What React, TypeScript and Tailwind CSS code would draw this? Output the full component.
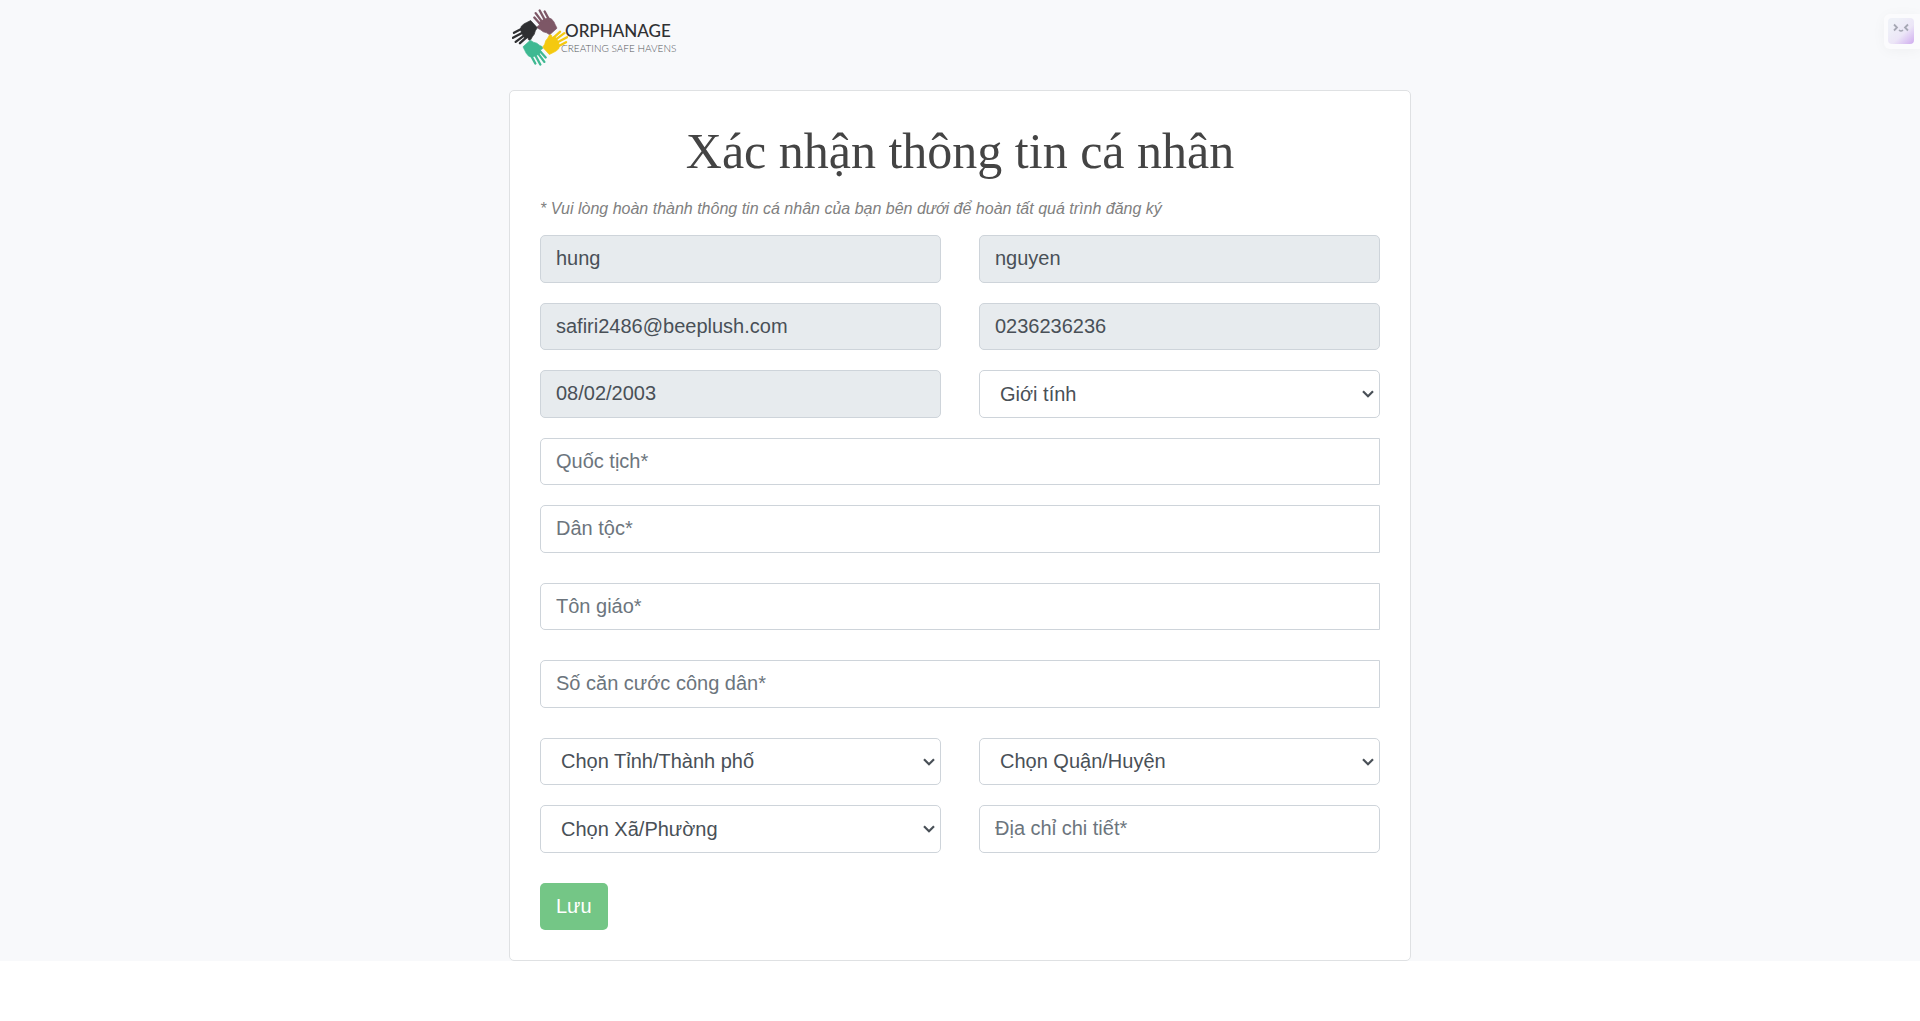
import type { ReactNode } from "react";

const base =
  "block w-full border border-[#ced4da] pb-px text-xl leading-[30px] outline-none placeholder:text-[#6c757d] placeholder:opacity-100";

type FieldProps = { label: string; height: string; value?: string; shape?: string };

function Field({ label, height, value, shape = "rounded-[5px]" }: FieldProps) {
  return value ? (
    <input
      aria-label={label}
      disabled
      defaultValue={value}
      className={`${base} ${height} ${shape} bg-[#e7ebee] px-[15px] text-[#495057]`}
    />
  ) : (
    <input
      aria-label={label}
      placeholder={label}
      className={`${base} ${height} ${shape} bg-white px-[15px] text-[#495057]`}
    />
  );
}

function Choice({ label, height }: { label: string; height: string }) {
  return (
    <div className="relative">
      <select
        aria-label={label}
        className={`${base} ${height} appearance-none rounded-[5px] bg-white pr-8 pl-5 text-[#495057]`}
      >
        <option>{label}</option>
      </select>
      <svg
        viewBox="0 0 12 8"
        className="pointer-events-none absolute top-1/2 right-1.5 h-2 w-3 -translate-y-1/2"
        fill="none"
        stroke="#495057"
        strokeWidth="2.2"
      >
        <path d="M1 1.2 6 6.2 11 1.2" />
      </svg>
    </div>
  );
}

function Pair({ children }: { children: ReactNode }) {
  return <div className="grid grid-cols-2 gap-x-[38px]">{children}</div>;
}

function Hand({ color, turn }: { color: string; turn: number }) {
  return (
    <g transform={`rotate(${turn} 105 100)`} stroke={color} fill={color} strokeLinecap="round" strokeLinejoin="round">
      <path
        strokeWidth="2"
        d="M102 55 L114 47 L129 41 L139 44 Q148 53 150 60 L156 72 L134 92 L125 86 Q113 84 107 77 L98 72 Q95 67 99 65 L104 64 Z"
      />
      <path strokeWidth="7" fill="none" d="M106 60 L88 40 M112 54 L92 27 M121 50 L104 19 M133 48 L119 22" />
    </g>
  );
}

function Logo() {
  return (
    <a href="#" aria-label="Orphanage" className="flex w-max items-start pt-[9px] pl-[3px] no-underline">
      <svg viewBox="21 15 168 170" className="h-[57px] w-14 shrink-0">
        <Hand color="#7d5766" turn={0} />
        <Hand color="#2f3032" turn={-90} />
        <Hand color="#3fb992" turn={180} />
        <Hand color="#f4c90f" turn={90} />
      </svg>
      <span className="-ml-[7px] flex flex-col pt-[10px]">
        <span className="pl-1 font-['Lato'] text-[17px] leading-6 font-medium text-[#303133]">ORPHANAGE</span>
        <span className="font-['Lato'] text-[10px] leading-[10px] font-light text-[#55585c]">CREATING SAFE HAVENS</span>
      </span>
    </a>
  );
}

function Assistant() {
  return (
    <button
      aria-label="Assistant"
      className="fixed top-[14px] right-0 flex h-[35px] w-9 items-center rounded-l-md bg-[#fbfbfd] pb-px pl-1 shadow-[0_2px_14px_rgba(0,0,0,0.04)]"
    >
      <svg viewBox="0 0 26 26" className="size-[26px]" fill="none">
        <defs>
          <linearGradient id="face" x1="6" y1="4" x2="26" y2="26" gradientUnits="userSpaceOnUse">
            <stop offset="0" stopColor="#eff1f8" />
            <stop offset="0.5" stopColor="#ece6f7" />
            <stop offset="1" stopColor="#cfabef" />
          </linearGradient>
        </defs>
        <rect width="26" height="26" rx="4" fill="url(#face)" />
        <path d="M6 6.500 9 9.500 6 12.500 M20 6.500 17 9.500 20 12.500" stroke="#a6a8b4" strokeWidth="1.800" />
        <path d="M11 12 Q13 14 15 12" stroke="#a6a8b4" strokeWidth="1.500" />
      </svg>
    </button>
  );
}

export default function App() {
  const open = "rounded-l-[5px]";
  return (
    <div className="min-h-screen bg-white font-['Liberation_Sans',sans-serif]">
      <div className="bg-[#f8f9fb]">
        <div className="mx-auto max-w-[902px]">
          <header className="h-[90px]">
            <Logo />
          </header>
          <form className="rounded-[5px] border border-[#dfe1e3] bg-white px-[30px] pt-[30px] pb-[30px]">
            <h1 className="text-center font-['Liberation_Serif',serif] text-[50px] leading-[60px] text-[#444444]">
              Xác nhận thông tin cá nhân
            </h1>
            <p className="mt-4 mb-[14px] text-base leading-6 text-[#808080] italic">
              * Vui lòng hoàn thành thông tin cá nhân của bạn bên dưới để hoàn tất quá trình đăng ký
            </p>
            <div className="flex flex-col gap-5">
              <Pair>
                <Field label="Tên" value="hung" height="h-12" />
                <Field label="Họ" value="nguyen" height="h-12" />
              </Pair>
              <Pair>
                <Field label="Email" value="safiri2486@beeplush.com" height="h-[47px]" />
                <Field label="Số điện thoại" value="0236236236" height="h-[47px]" />
              </Pair>
              <Pair>
                <Field label="Ngày sinh" value="08/02/2003" height="h-12" />
                <Choice label="Giới tính" height="h-12" />
              </Pair>
              <Field label="Quốc tịch*" height="h-[47px]" shape={open} />
              <div className="flex flex-col gap-[30px]">
                <Field label="Dân tộc*" height="h-12" shape={open} />
                <Field label="Tôn giáo*" height="h-[47px]" shape={open} />
                <Field label="Số căn cước công dân*" height="h-12" shape={open} />
                <Pair>
                  <Choice label="Chọn Tỉnh/Thành phố" height="h-[47px]" />
                  <Choice label="Chọn Quận/Huyện" height="h-[47px]" />
                </Pair>
              </div>
              <Pair>
                <Choice label="Chọn Xã/Phường" height="h-12" />
                <Field label="Địa chỉ chi tiết*" height="h-12" />
              </Pair>
            </div>
            <button type="button" className="mt-[30px] h-[47px] rounded-[5px] bg-[#74c686] px-4 pb-px text-xl text-white">
              Lưu
            </button>
          </form>
        </div>
      </div>
      <Assistant />
    </div>
  );
}
